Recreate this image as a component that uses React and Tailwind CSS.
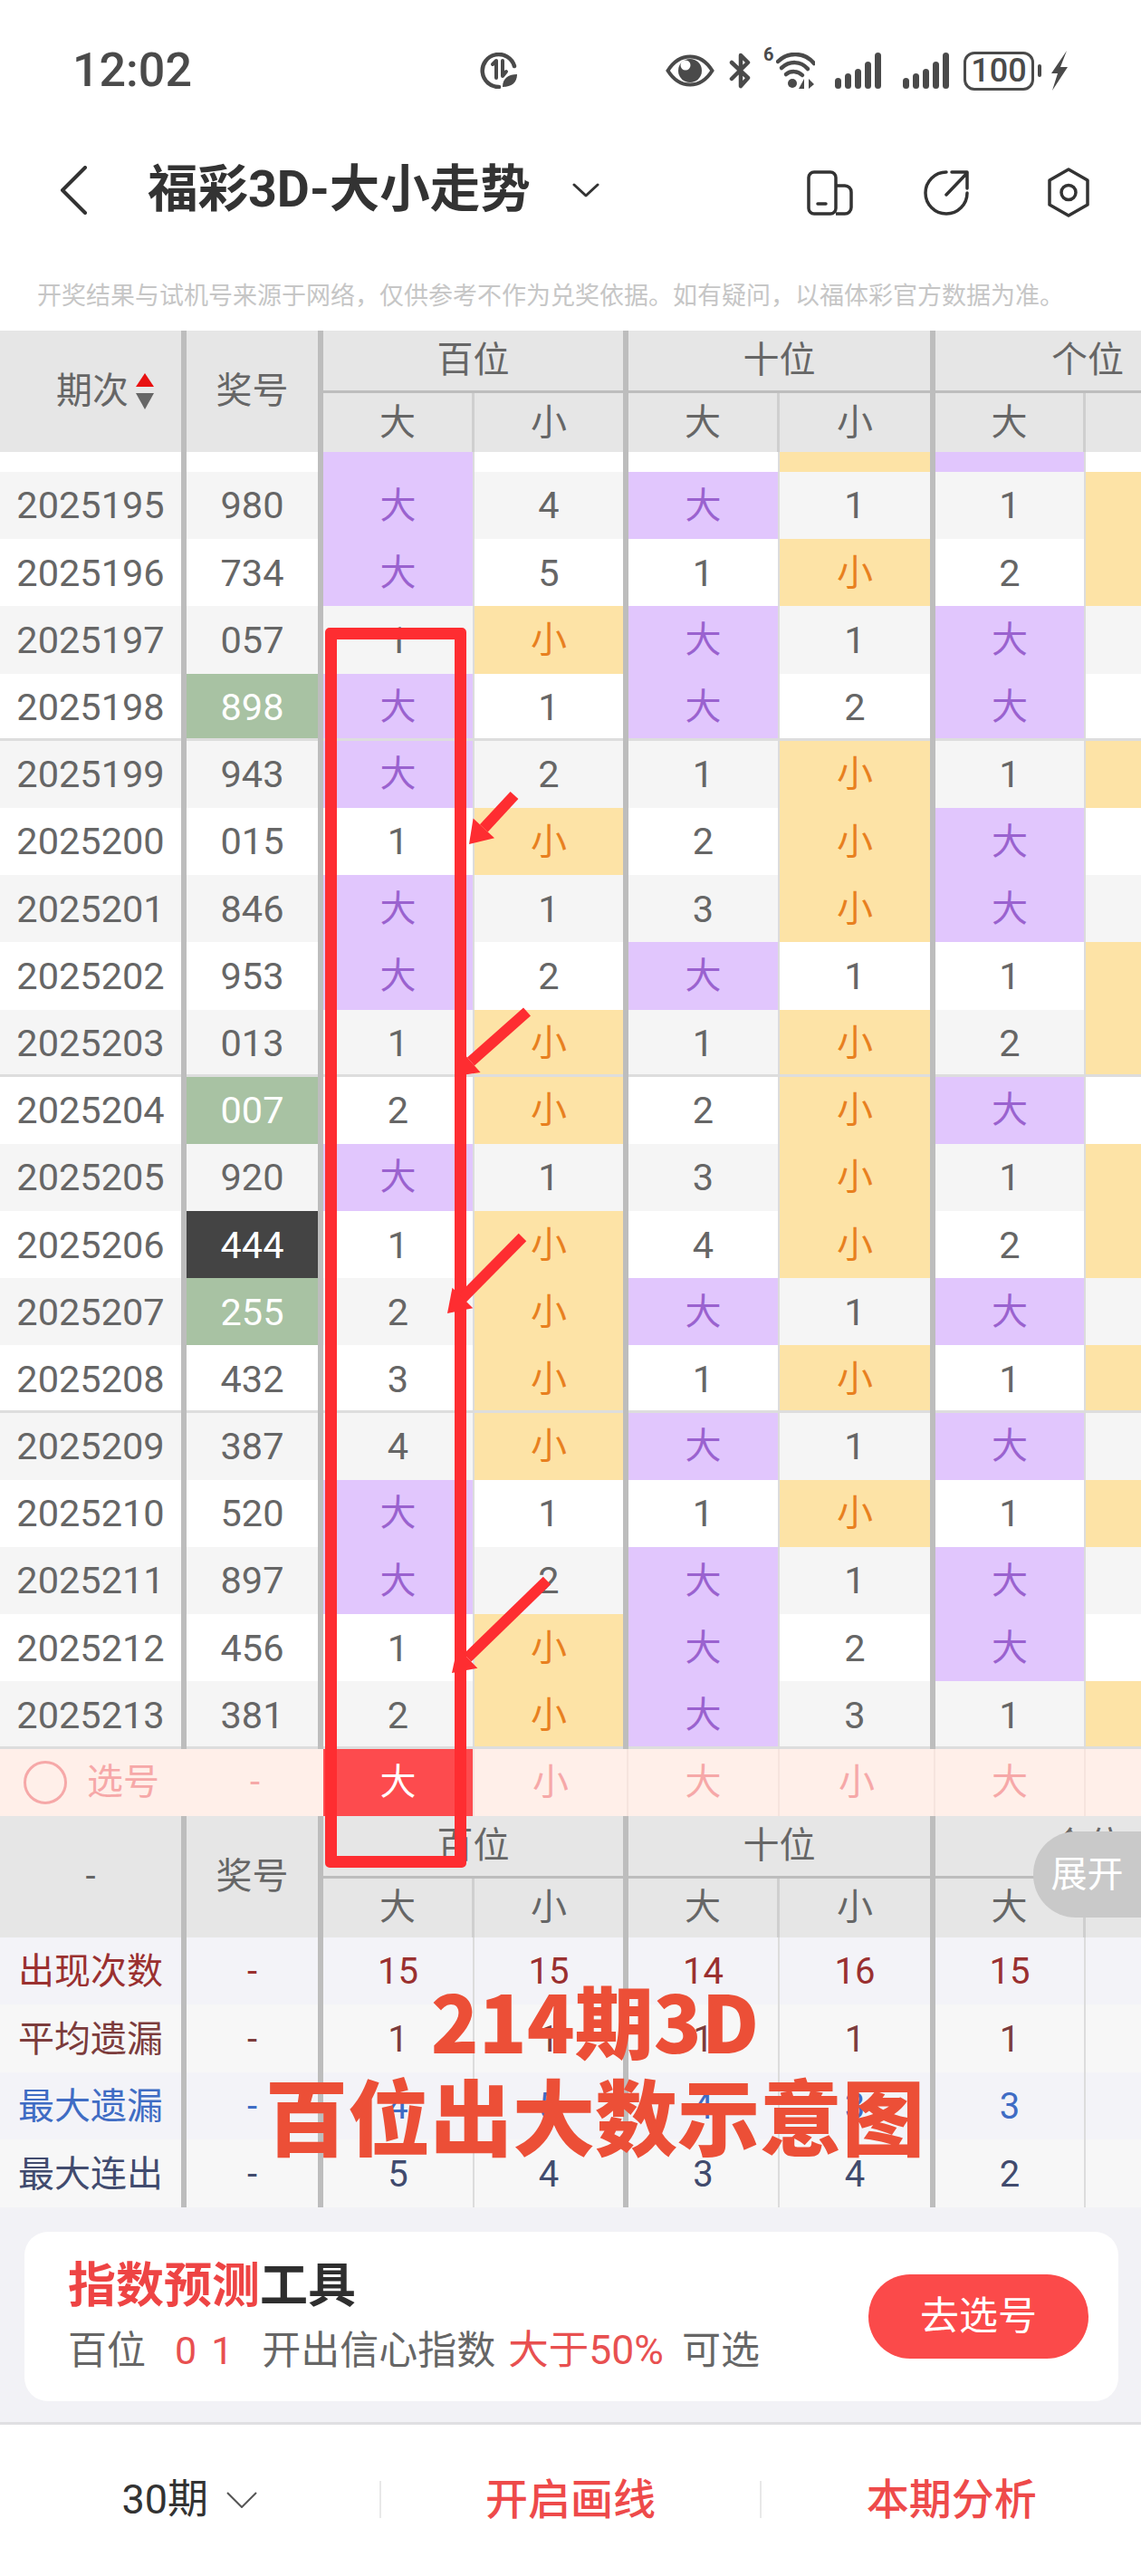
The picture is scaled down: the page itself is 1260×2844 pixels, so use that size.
import React from 'react';

const ROWS = [
    ['2025195', '980', '', ['大', '4', '大', '1', '1', '小']],
    ['2025196', '734', '', ['大', '5', '1', '小', '2', '小']],
    ['2025197', '057', '', ['1', '小', '大', '1', '大', '1']],
    ['2025198', '898', 'green', ['大', '1', '大', '2', '大', '2']],
    ['2025199', '943', '', ['大', '2', '1', '小', '1', '小']],
    ['2025200', '015', '', ['1', '小', '2', '小', '大', '1']],
    ['2025201', '846', '', ['大', '1', '3', '小', '大', '2']],
    ['2025202', '953', '', ['大', '2', '大', '1', '1', '小']],
    ['2025203', '013', '', ['1', '小', '1', '小', '2', '小']],
    ['2025204', '007', 'green', ['2', '小', '2', '小', '大', '1']],
    ['2025205', '920', '', ['大', '1', '3', '小', '1', '小']],
    ['2025206', '444', 'dark', ['1', '小', '4', '小', '2', '小']],
    ['2025207', '255', 'green', ['2', '小', '大', '1', '大', '1']],
    ['2025208', '432', '', ['3', '小', '1', '小', '1', '小']],
    ['2025209', '387', '', ['4', '小', '大', '1', '大', '1']],
    ['2025210', '520', '', ['大', '1', '1', '小', '1', '小']],
    ['2025211', '897', '', ['大', '2', '大', '1', '大', '1']],
    ['2025212', '456', '', ['1', '小', '大', '2', '大', '2']],
    ['2025213', '381', '', ['2', '小', '大', '3', '1', '小']],
];

const STATS = [
    ['出现次数', 'text-[#9a3030]', 'bg-[#f3f3f8]', ['15', '15', '14', '16', '15', '15']],
    ['平均遗漏', 'text-[#7c3c3c]', 'bg-[#f7f7f7]', ['1', '1', '1', '1', '1', '1']],
    ['最大遗漏', 'text-[#3f6cc4]', 'bg-[#f3f3f8]', ['4', '5', '4', '3', '3', '3']],
    ['最大连出', 'text-[#414b6e]', 'bg-[#f7f7f7]', ['5', '4', '3', '4', '2', '3']],
];

const COL_W = ['w-[167px]', 'w-[170px]', 'w-[167px]', 'w-[172px]', 'w-[166px]', 'w-[170px]'];
const COL_B = [
    'border-r-2 border-r-[#dcdcdc]',
    'border-r-[6px] border-r-[#bdbdbd]',
    'border-r-2 border-r-[#dcdcdc]',
    'border-r-[6px] border-r-[#bdbdbd]',
    'border-r-2 border-r-[#dcdcdc]',
    '',
];

function Row({ row, index, pad = 'pt-[1px]' }) {
    const [period, num, badge, cells] = row;
    const line = index % 5 === 3 ? 'shadow-[inset_0_-3px_0_#dddddd]' : '';
    const bg = index % 2 === 0 ? 'bg-[#f5f5f5]' : 'bg-white';
    const numCls =
        badge === 'green'
            ? 'bg-[#a8c2a3] text-white'
            : badge === 'dark'
                ? 'bg-[#444444] text-white'
                : 'text-[#666666]';
    return (
        <div className={`flex h-[74.2px] shrink-0 text-[41.5px] ${bg}`}>
            <div className="flex w-[206px] shrink-0 border-r-[6px] border-r-[#bdbdbd]">
                <div className={`flex w-full items-center justify-center pt-[1px] text-[#666666] ${line}`}>{period}</div>
            </div>
            <div className="flex w-[151px] shrink-0 border-r-[6px] border-r-[#bdbdbd]">
                <div className={`flex w-full items-center justify-center pt-[1px] ${numCls} ${line}`}>{num}</div>
            </div>
            {cells.map((v, i) => (
                <TrendCell key={i} v={v} i={i} line={line} pad={pad} />
            ))}
        </div>
    );
}

function TrendCell({ v, i, line, pad }) {
    const tone =
        v === '大'
            ? 'bg-[#e1c6fd] text-[#9a62cf] text-[40px]'
            : v === '小'
                ? 'bg-[#fde3a6] text-[#e8801f] text-[40px]'
                : 'text-[#666666]';
    return (
        <div className={`flex shrink-0 ${COL_W[i]} ${COL_B[i]}`}>
            <div className={`flex w-full items-center justify-center ${pad} ${tone} ${line}`}>{v}</div>
        </div>
    );
}

function TableHead({ left }) {
    const subs = ['大', '小', '大', '小', '大', '小'];
    return (
        <div className="flex h-[134px] shrink-0 bg-[#e6e6e6] text-[40px] text-[#666666]">
            <div className="flex w-[206px] shrink-0 items-center justify-center border-r-[6px] border-r-[#bdbdbd]">{left}</div>
            <div className="flex w-[151px] shrink-0 items-center justify-center border-r-[6px] border-r-[#bdbdbd]">奖号</div>
            <div className="flex w-[1012px] shrink-0 flex-col">
                <div className="flex h-[69px] border-b-[3px] border-b-[#bdbdbd]">
                    <div className="flex w-[337px] items-center justify-center border-r-[6px] border-r-[#bdbdbd]">百位</div>
                    <div className="flex w-[339px] items-center justify-center border-r-[6px] border-r-[#bdbdbd]">十位</div>
                    <div className="flex w-[336px] items-center justify-center">个位</div>
                </div>
                <div className="flex h-[65px]">
                    {subs.map((s, i) => (
                        <div key={i} className={`flex shrink-0 items-center justify-center ${COL_W[i]} ${i % 2 === 0 ? 'border-r-[3px] border-r-[#cfcfcf]' : COL_B[i]}`}>
                            {s}
                        </div>
                    ))}
                </div>
            </div>
        </div>
    );
}

function SortArrows() {
    return (
        <svg width="20" height="40" viewBox="0 0 20 40" className="ml-[8px]">
            <path d="M10 0 L20 15 H0 Z" fill="#e81010" />
            <path d="M0 22 H20 L10 40 Z" fill="#666666" />
        </svg>
    );
}

function PickRow() {
    const picks = ['大', '小', '大', '小', '大', '小'];
    return (
        <div className="flex h-[74.2px] shrink-0 bg-[#ffefe9] text-[40px] text-[#f6a8a8]">
            <div className="flex w-[206px] shrink-0 items-center pl-[26px]">
                <div className="h-[48px] w-[48px] rounded-full border-[3px] border-[#f6a8a8]" />
                <span className="ml-[22px]">选号</span>
            </div>
            <div className="flex w-[151px] shrink-0 items-center justify-center">-</div>
            {picks.map((p, i) => (
                <div
                    key={i}
                    className={`flex shrink-0 items-center justify-center ${COL_W[i]} ${i === 5 ? '' : 'border-r-2 border-r-[#f6e4de]'} ${i === 0 ? 'bg-[#fd4b4e] text-white' : ''}`}
                >
                    {p}
                </div>
            ))}
        </div>
    );
}

function StatRow({ stat }) {
    const [label, color, bg, vals] = stat;
    return (
        <div className={`flex h-[74.5px] shrink-0 text-[40px] ${color} ${bg}`}>
            <div className="flex w-[206px] shrink-0 items-center justify-center border-r-[6px] border-r-[#bdbdbd] pt-[2px]">{label}</div>
            <div className="flex w-[151px] shrink-0 items-center justify-center border-r-[6px] border-r-[#bdbdbd] pt-[2px]">-</div>
            {vals.map((v, i) => (
                <div key={i} className={`flex shrink-0 items-center justify-center pt-[2px] ${COL_W[i]} ${COL_B[i]}`}>
                    {v}
                </div>
            ))}
        </div>
    );
}

function SignalIcon({ className }) {
    const bars = [
        [0, 12],
        [11, 17],
        [22, 22],
        [33, 30],
        [44, 40],
    ];
    return (
        <svg width="51" height="40" viewBox="0 0 51 40" className={className}>
            {bars.map(([x, h]) => (
                <rect key={x} x={x} y={40 - h} width="7" height={h} rx="3.5" fill="#4a4a4a" />
            ))}
        </svg>
    );
}

function StatusBar() {
    return (
        <div className="flex h-[156px] shrink-0 items-center pl-[80px] text-[#4a4a4a]">
            <span className="w-[127px] text-[52px] leading-none font-medium">12:02</span>
            <svg width="42" height="40" viewBox="0 0 42 40" fill="none" className="ml-[323px]">
                <path d="M21 38 A18 18 0 1 1 38 15" stroke="#4a4a4a" strokeWidth="4.5" strokeLinecap="round" />
                <path d="M14 13 L18 9 V28 M25 9 V26 L29 21" stroke="#4a4a4a" strokeWidth="4" strokeLinecap="round" strokeLinejoin="round" />
                <path d="M25 38 C25 28 32 24 41 24 C41 33 35 38 25 38 Z" fill="#4a4a4a" />
            </svg>
            <svg width="54" height="36" viewBox="0 0 54 36" fill="none" className="ml-[163px]">
                <path d="M2.5 18 C10 6 18 2.5 27 2.5 C36 2.5 44 6 51.5 18 C44 30 36 33.5 27 33.5 C18 33.5 10 30 2.5 18 Z" stroke="#4a4a4a" strokeWidth="4" />
                <circle cx="27" cy="18" r="13" fill="#4a4a4a" />
                <circle cx="22" cy="12" r="5.5" fill="#ffffff" />
            </svg>
            <svg width="25" height="40" viewBox="0 0 25 40" fill="none" className="ml-[16px]">
                <path d="M3 11 L21 28 L13 37 V24 M13 16 V3 L21 11 L3 29" stroke="#4a4a4a" strokeWidth="4.5" strokeLinecap="round" strokeLinejoin="round" />
            </svg>
            <div className="ml-[13px] flex w-[57px] items-start">
                <span className="-mt-[8px] w-[14px] text-[20px] leading-none font-bold">6</span>
                <svg width="43" height="40" viewBox="0 0 43 40" fill="none">
                    <path d="M2 10 C13 -1 31 -1 42 12" stroke="#4a4a4a" strokeWidth="4.5" strokeLinecap="round" />
                    <path d="M6 17 C15 9 27 9 35 18" stroke="#4a4a4a" strokeWidth="4.5" strokeLinecap="round" />
                    <path d="M11 24 C16 20 24 20 29 25" stroke="#4a4a4a" strokeWidth="4.5" strokeLinecap="round" />
                    <circle cx="18" cy="34" r="5" fill="#4a4a4a" />
                    <path d="M31 29 V40 H25 Z M36 29 V40 L42 35 Z" fill="#4a4a4a" />
                </svg>
            </div>
            <SignalIcon className="ml-[22px]" />
            <SignalIcon className="ml-[24px]" />
            <div className="ml-[16px] flex h-[43px] w-[78px] items-center justify-center rounded-[12px] border-[3.5px] border-[#4a4a4a] text-[36px] leading-none font-medium">
                100
            </div>
            <div className="ml-[4px] h-[14px] w-[4px] rounded-full bg-[#4a4a4a]" />
            <svg width="20" height="44" viewBox="0 0 20 44" className="ml-[10px]">
                <path d="M18 0 L1 25 H8 L2 44 L19 18 H11 Z" fill="#4a4a4a" />
            </svg>
        </div>
    );
}

function NavBar() {
    return (
        <div className="flex h-[108px] shrink-0 items-center text-[#333333]">
            <svg width="30" height="54" viewBox="0 0 30 54" fill="none" className="ml-[66px]">
                <path d="M28 2 L3 27 L28 52" stroke="#333333" strokeWidth="4" strokeLinecap="round" strokeLinejoin="round" />
            </svg>
            <h1 className="ml-[67px] w-[418px] text-[55.5px] leading-none font-bold whitespace-nowrap">福彩3D-大小走势</h1>
            <svg width="30" height="16" viewBox="0 0 30 16" fill="none" className="ml-[51px]">
                <path d="M2 2 L15 14 L28 2" stroke="#333333" strokeWidth="3" strokeLinecap="round" strokeLinejoin="round" />
            </svg>
            <svg width="51" height="50" viewBox="0 0 51 50" fill="none" className="mt-[5px] ml-[229px]">
                <rect x="2" y="2" width="30" height="46" rx="6" stroke="#333333" strokeWidth="3.5" />
                <path d="M32 17 H42 A7 7 0 0 1 49 24 V41 A7 7 0 0 1 42 48 H32" stroke="#333333" strokeWidth="3.5" />
                <path d="M12 37 H21" stroke="#333333" strokeWidth="3.5" strokeLinecap="round" />
            </svg>
            <svg width="50" height="50" viewBox="0 0 50 50" fill="none" className="mt-[5px] ml-[78px]">
                <path d="M25 2 A23 23 0 1 0 48 25" stroke="#333333" strokeWidth="3.5" strokeLinecap="round" />
                <path d="M25 27 L48 3 M31 2 H48 V20" stroke="#333333" strokeWidth="3.5" strokeLinecap="round" strokeLinejoin="round" />
            </svg>
            <svg width="46" height="55" viewBox="0 0 46 55" fill="none" className="mt-[5px] ml-[87px]">
                <path d="M23 2 L44 14 V41 L23 53 L2 41 V14 Z" stroke="#333333" strokeWidth="3.5" strokeLinejoin="round" />
                <circle cx="23" cy="27.5" r="8" stroke="#333333" strokeWidth="3.5" />
            </svg>
        </div>
    );
}

// red hand-drawn arrows on top of the chart
function Arrow({ x1, y1, x2, y2 }) {
    const len = Math.hypot(x2 - x1, y2 - y1);
    const ux = (x2 - x1) / len;
    const uy = (y2 - y1) / len;
    const bx = x2 - ux * 24;
    const by = y2 - uy * 24;
    const pts = `${x2},${y2} ${bx - uy * 16},${by + ux * 16} ${bx + uy * 16},${by - ux * 16}`;
    return (
        <g>
            <line x1={x1} y1={y1} x2={bx} y2={by} stroke="#fe2d31" strokeWidth="12" />
            <polygon points={pts} fill="#fe2d31" />
        </g>
    );
}

export default function App() {
    return (
        <div className="relative flex h-[2844px] w-full flex-col overflow-hidden bg-white font-[Roboto,'Noto_Sans_CJK_SC',sans-serif]">
            <StatusBar />
            <NavBar />
            <div className="flex h-[101px] shrink-0 items-start pt-[43px] pl-[41px] text-[27px] leading-[40px] whitespace-nowrap text-[#c6c6c6]">
                开奖结果与试机号来源于网络，仅供参考不作为兑奖依据。如有疑问，以福体彩官方数据为准。
            </div>

            <TableHead
                left={
                    <div className="flex items-center pl-[32px]">
                        <span>期次</span>
                        <SortArrows />
                    </div>
                }
            />
            {/* row scrolled mostly out of view under the header */}
            <div className="flex h-[22px] shrink-0 flex-col justify-end overflow-hidden">
                <Row row={['', '', '', ['大', '', '', '小', '大', '']]} index={1} pad="pb-[12px]" />
            </div>
            {ROWS.map((row, i) => (
                <Row key={row[0]} row={row} index={i} />
            ))}
            <PickRow />
            <TableHead left="-" />
            {STATS.map((s) => (
                <StatRow key={s[0]} stat={s} />
            ))}

            <div className="flex h-[240px] shrink-0 flex-col border-b-[3px] border-b-[#dfdfe2] bg-[#f2f2f6] pt-[27px] pr-[25px] pl-[27px]">
                <div className="flex h-[187px] items-center justify-between rounded-[26px] bg-white pr-[33px] pl-[48px]">
                    <div>
                        <div className="text-[53px] leading-[64px] font-bold text-[#2e2e2e]">
                            <span className="text-[#ee4444]">指数预测</span>工具
                        </div>
                        <div className="mt-[11px] flex text-[43px] leading-[56px] whitespace-nowrap text-[#666666]">
                            <span>百位</span>
                            <span className="ml-[32px] text-[#e85050]">0</span>
                            <span className="ml-[16px] text-[#e85050]">1</span>
                            <span className="ml-[32px]">开出信心指数</span>
                            <span className="ml-[14px] text-[44.5px] text-[#e85050]">大于50%</span>
                            <span className="ml-[20px]">可选</span>
                        </div>
                    </div>
                    <div className="flex h-[93px] w-[243px] items-center justify-center rounded-[46px] bg-[#fb4a4a] text-[43px] text-white">
                        去选号
                    </div>
                </div>
            </div>

            <div className="flex h-[166px] items-center">
                <div className="flex flex-1 items-center justify-center text-[45px] text-[#333333]">
                    <span>30期</span>
                    <svg width="34" height="18" viewBox="0 0 34 18" fill="none" className="ml-[20px]">
                        <path d="M1 1 L17 17 L33 1" stroke="#555555" strokeWidth="2" />
                    </svg>
                </div>
                <div className="h-[41px] w-[2px] bg-[#e8e8e8]" />
                <div className="flex-1 text-center text-[47px] font-medium text-[#ee4a4a]">开启画线</div>
                <div className="h-[41px] w-[2px] bg-[#e8e8e8]" />
                <div className="flex-1 text-center text-[47px] font-medium text-[#ee4a4a]">本期分析</div>
            </div>

            {/* annotations painted over the screenshot */}
            <div className="absolute top-[693px] left-[359px] h-[1369px] w-[156px] rounded-[5px] border-[13px] border-[#fe2d31]" />
            <svg width="1260" height="2844" viewBox="0 0 1260 2844" className="pointer-events-none absolute top-0 left-0">
                <Arrow x1={568} y1={878} x2={518} y2={932} />
                <Arrow x1={582} y1={1117} x2={502} y2={1188} />
                <Arrow x1={577} y1={1366} x2={494} y2={1450} />
                <Arrow x1={604} y1={1745} x2={499} y2={1847} />
            </svg>
            <div className="absolute top-[2022px] right-0 flex h-[95px] w-[119px] items-center justify-center rounded-l-[47px] bg-[#c9c9c9] text-[40px] text-white">
                展开
            </div>
            <div className="absolute top-[2181px] left-[297px] w-[720px] text-center font-['Noto_Sans_CJK_SC',sans-serif] font-black whitespace-nowrap text-[#ec4f37]">
                <div className="text-[87px] leading-[96px]">214期3D</div>
                <div className="mt-[4px] -mx-[10px] text-[91px] leading-[104px]">百位出大数示意图</div>
            </div>
        </div>
    );
}
